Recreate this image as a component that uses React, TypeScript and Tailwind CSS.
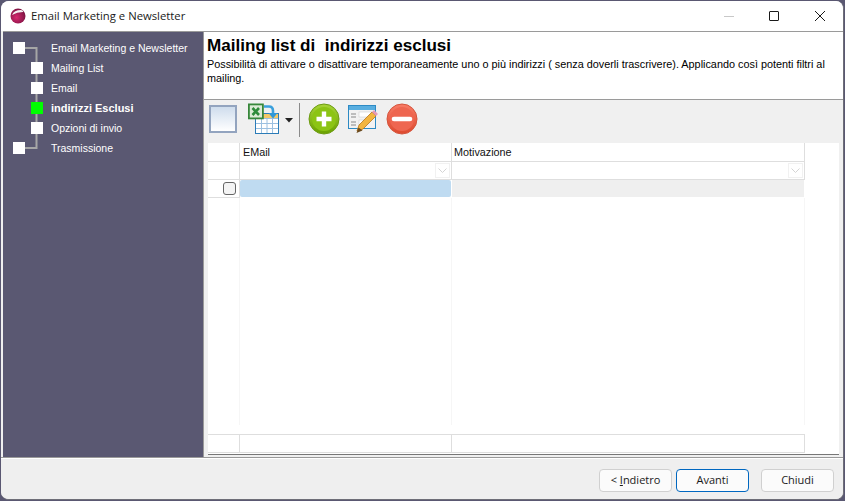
import type { ReactNode } from "react";

const rows = [
  { t: "Email Marketing e Newsletter", lvl: 0 },
  { t: "Mailing List", lvl: 1 },
  { t: "Email", lvl: 1 },
  { t: "indirizzi Esclusi", lvl: 1, active: true },
  { t: "Opzioni di invio", lvl: 1 },
  { t: "Trasmissione", lvl: 0 },
];

const Tree = () => (
  <div className="relative pt-[6px]">
    <svg className="absolute left-0 top-0" width="60" height="130" fill="none" stroke="#a6a6a6" strokeWidth="2">
      <path d="M20 16H33.5V116H20" />
    </svg>
    {rows.map((r) => (
      <div key={r.t} className="relative h-5 flex items-center">
        <span className={`shrink-0 ${r.lvl === 0 ? "w-[10px]" : "w-[28px]"}`} />
        <span
          className={`shrink-0 w-[12px] h-[12px] ${r.active ? "bg-[#00ff00]" : "bg-white"} ${r.lvl === 0 ? "mr-[26px]" : "mr-[8px]"}`}
        />
        <span className={`text-white whitespace-nowrap ${r.active ? "font-bold text-[11px]" : "text-[10.5px] pt-[2px]"}`}>{r.t}</span>
      </div>
    ))}
  </div>
);

const Excel = () => (
  <svg width="32" height="32" viewBox="0 0 32 32" className="shrink-0">
    <rect x="7.5" y="10.5" width="23" height="20" fill="#fff" stroke="#2b7cb8" />
    <rect x="8" y="11" width="22" height="4" fill="#f4c868" />
    <path d="M8 15.5H30M8 20.5H30M8 25.5H30M13.5 15V30M19 15V30M24.5 15V30" stroke="#9cc0e0" fill="none" />
    <rect x="0.9" y="1.4" width="14" height="14" fill="#dcebd6" stroke="#37873a" strokeWidth="1.8" />
    <path d="M4.5 5L11 12M11 5L4.5 12" stroke="#2e8b3a" strokeWidth="2.6" />
    <path d="M16 3.5H21Q25 3.5 25 8V11" stroke="#3aa0dc" strokeWidth="2.6" fill="none" />
    <path d="M20.5 10H29.5L25 15.5Z" fill="#2f98d8" />
  </svg>
);

const Plus = () => (
  <svg width="32" height="32" viewBox="0 0 32 32" className="shrink-0">
    <defs>
      <linearGradient id="pg" x1="0" y1="0" x2="0" y2="1">
        <stop offset="0" stopColor="#a7d437" />
        <stop offset="1" stopColor="#6aa100" />
      </linearGradient>
    </defs>
    <circle cx="16" cy="16" r="15" fill="url(#pg)" stroke="#6d9b14" />
    <circle cx="16" cy="16" r="12" fill="#8cc414" />
    <path d="M16 8.5V23.5M8.5 16H23.5" stroke="#fff" strokeWidth="4.4" />
  </svg>
);

const Minus = () => (
  <svg width="32" height="32" viewBox="0 0 32 32" className="shrink-0">
    <defs>
      <linearGradient id="mg" x1="0" y1="0" x2="0" y2="1">
        <stop offset="0" stopColor="#f87b66" />
        <stop offset="1" stopColor="#dd4a2f" />
      </linearGradient>
    </defs>
    <circle cx="16" cy="16" r="15" fill="url(#mg)" stroke="#d4553d" />
    <circle cx="16" cy="16" r="12" fill="#ee6650" />
    <path d="M8 16H24" stroke="#fff" strokeWidth="4.6" strokeLinecap="round" />
  </svg>
);

const EditForm = () => (
  <svg width="30" height="32" viewBox="0 0 30 32" className="shrink-0">
    <rect x="0.5" y="2.5" width="27" height="23" fill="#f2f2f2" stroke="#2d8ac4" />
    <rect x="1" y="3" width="26" height="4" fill="#58aee0" />
    <rect x="11" y="9" width="13" height="5" fill="#fff" stroke="#c8c8c8" strokeWidth="0.5" />
    <rect x="11" y="17" width="7" height="5" fill="#fff" stroke="#c8c8c8" strokeWidth="0.5" />
    <path d="M3 11H8M3 14H8M3 19H8M3 22H8" stroke="#888" />
    <path d="M9 28L11 22L24 9L28 13L15 26Z" fill="#f3b53f" stroke="#b5761c" strokeWidth="0.8" />
    <path d="M24 9L26 7L30 11L28 13Z" fill="#e59ab8" />
    <path d="M8.5 30L10.5 24.5L14.5 27.5Z" fill="#6b4a1e" />
  </svg>
);

const FilterBtn = () => (
  <span className="w-[15px] h-[15px] border border-[#f1f1f1] bg-white flex items-center justify-center">
    <svg width="9" height="6" viewBox="0 0 9 6" fill="none" stroke="#d4d4d4">
      <path d="M0.5 0.5L4.5 4.5L8.5 0.5" />
    </svg>
  </span>
);

const Btn = ({ children, primary = false }: { children: ReactNode; primary?: boolean }) => (
  <div
    className={`w-[73px] h-[23px] rounded-[4px] flex items-center justify-center text-[11px] text-[#1a1a1a] bg-[#fbfbfb] border ${primary ? "border-[#0067c0]" : "border-[#d0d0d0]"}`}
  >
    {children}
  </div>
);

export default function App() {
  return (
    <div className="w-[845px] h-[501px] bg-[#5a5872] overflow-hidden pl-px pt-px" style={{ fontFamily: '"Liberation Sans", sans-serif' }}>
      <div className="h-[499px] w-[843px] rounded-[8px] overflow-hidden bg-[#efefef] flex flex-col border-b border-r border-[#6e6e78]">
        <div className="h-[30px] shrink-0 bg-white flex items-center">
          <svg className="ml-[9px] mr-[5px] shrink-0" width="16" height="16" viewBox="0 0 16 16">
            <defs>
              <radialGradient id="lg" cx="0.4" cy="0.6" r="0.7">
                <stop offset="0" stopColor="#d6286e" />
                <stop offset="1" stopColor="#70103c" />
              </radialGradient>
            </defs>
            <circle cx="8" cy="8" r="7.5" fill="url(#lg)" />
            <path d="M2 7Q4 2 11 2Q14 3 13 4Q7 4 2 7Z" fill="#f4f0f2" />
          </svg>
          <span className="text-[11.3px] text-[#1a1a1a] whitespace-nowrap" style={{ fontFamily: '"Open Sans", sans-serif' }}>
            Email Marketing e Newsletter
          </span>
          <div className="ml-auto flex items-center h-full">
            <span className="w-[10px] h-px bg-[#c8c8c8] mr-[35px]" />
            <span className="w-[10px] h-[10px] border border-[#1a1a1a] rounded-[1px] mr-[36px]" />
            <svg className="mr-[18px]" width="10" height="10" viewBox="0 0 10 10" stroke="#1a1a1a" strokeWidth="1">
              <path d="M0 0L10 10M10 0L0 10" />
            </svg>
          </div>
        </div>
        <div className="flex h-[427px] shrink-0 pl-[2px] bg-[#f0f0f0] border-b border-[#9a9a9a]">
          <div className="w-[200px] shrink-0 bg-[#5a5872] border-t border-[#9a9a9a]">
            <Tree />
          </div>
          <div className="flex-1 min-w-0 flex flex-col border-t border-l border-[#9a9a9a]">
            <div className="h-[68px] shrink-0 bg-white border-b border-[#9a9a9a] pl-[3px]">
              <div className="text-[17.1px] font-bold text-black leading-[20px] mt-[4px] whitespace-nowrap">Mailing list di&nbsp; indirizzi esclusi</div>
              <div className="text-[10.85px] text-black leading-[14px] mt-[1px] whitespace-nowrap">
                Possibilità di attivare o disattivare temporaneamente uno o più indirizzi ( senza doverli trascrivere). Applicando così potenti filtri al
                <br />
                mailing.
              </div>
            </div>
            <div className="h-[43px] shrink-0 flex items-start pt-[3px] pl-[5px]">
              <div className="w-[28px] h-[28px] mt-[2px] border-2 border-[#93a4bf] bg-gradient-to-b from-[#cfdded] to-white mr-[11px] shrink-0" />
              <Excel />
              <svg className="ml-[5px] mr-[6px] mt-[15px] shrink-0" width="8" height="5" viewBox="0 0 8 5"><path d="M0 0H8L4 4.5Z" fill="#222" /></svg>
              <span className="w-px h-[34px] bg-[#8a8a8a] mr-[8px] shrink-0" />
              <Plus />
              <span className="w-[8px] shrink-0" />
              <EditForm />
              <span className="w-[8px] shrink-0" />
              <Minus />
            </div>
            <div className="flex-1 min-h-0 pl-[4px] pr-[4px] pb-[2px]">
              <div className="h-full bg-white flex flex-col border-b border-[#777] text-[10.8px] text-[#111]">
                <div className="flex h-[19px] shrink-0">
                  <div className="w-[32px] border-r border-b border-[#dedede]" />
                  <div className="w-[212px] border-r border-b border-[#dedede] pl-[3px] leading-[18px]">EMail</div>
                  <div className="w-[353px] border-r border-b border-[#dedede] pl-[2px] leading-[18px]">Motivazione</div>
                </div>
                <div className="flex h-[18px] shrink-0">
                  <div className="w-[32px] border-r border-b border-[#dedede]" />
                  <div className="w-[212px] border-r border-b border-[#dedede] flex items-center justify-end pr-px"><FilterBtn /></div>
                  <div className="w-[353px] border-r border-b border-[#dedede] flex items-center justify-end pr-px"><FilterBtn /></div>
                </div>
                <div className="flex h-[18px] shrink-0">
                  <div className="w-[32px] border-r border-b border-[#dedede] flex items-center justify-end pr-[3px]">
                    <span className="w-[13px] h-[13px] rounded-[3px] border border-[#666] bg-[#f4f4f4]" />
                  </div>
                  <div className="w-[211px] h-[17px] bg-[#bfdbf1] rounded-[2px]" />
                  <div className="w-[352px] h-[17px] ml-px bg-[#efefef]" />
                </div>
                <div className="flex-1 min-h-0 flex pb-[9px]">
                  <div className="w-[32px] border-r border-[#f6f6f6]" />
                  <div className="w-[212px] border-r border-[#f6f6f6]" />
                  <div className="w-[353px] border-r border-[#f6f6f6]" />
                </div>
                <div className="flex h-[19px] shrink-0">
                  <div className="w-[32px] border-r border-t border-b border-[#dedede]" />
                  <div className="w-[212px] border-r border-t border-b border-[#dedede]" />
                  <div className="w-[353px] border-r border-t border-b border-[#dedede]" />
                </div>
                <div className="h-px shrink-0" />
              </div>
            </div>
          </div>
        </div>
        <div className="flex-1 min-h-0 bg-[#efefef] border-t border-white flex items-start pt-[10px] justify-end gap-[4px] pr-[9px]" style={{ fontFamily: '"Open Sans", sans-serif' }}>
          <Btn>&lt;&nbsp;<span className="underline">I</span>ndietro</Btn>
          <Btn primary>Avanti</Btn>
          <span className="w-[4px]" />
          <Btn>Chiudi</Btn>
        </div>
      </div>
    </div>
  );
}
